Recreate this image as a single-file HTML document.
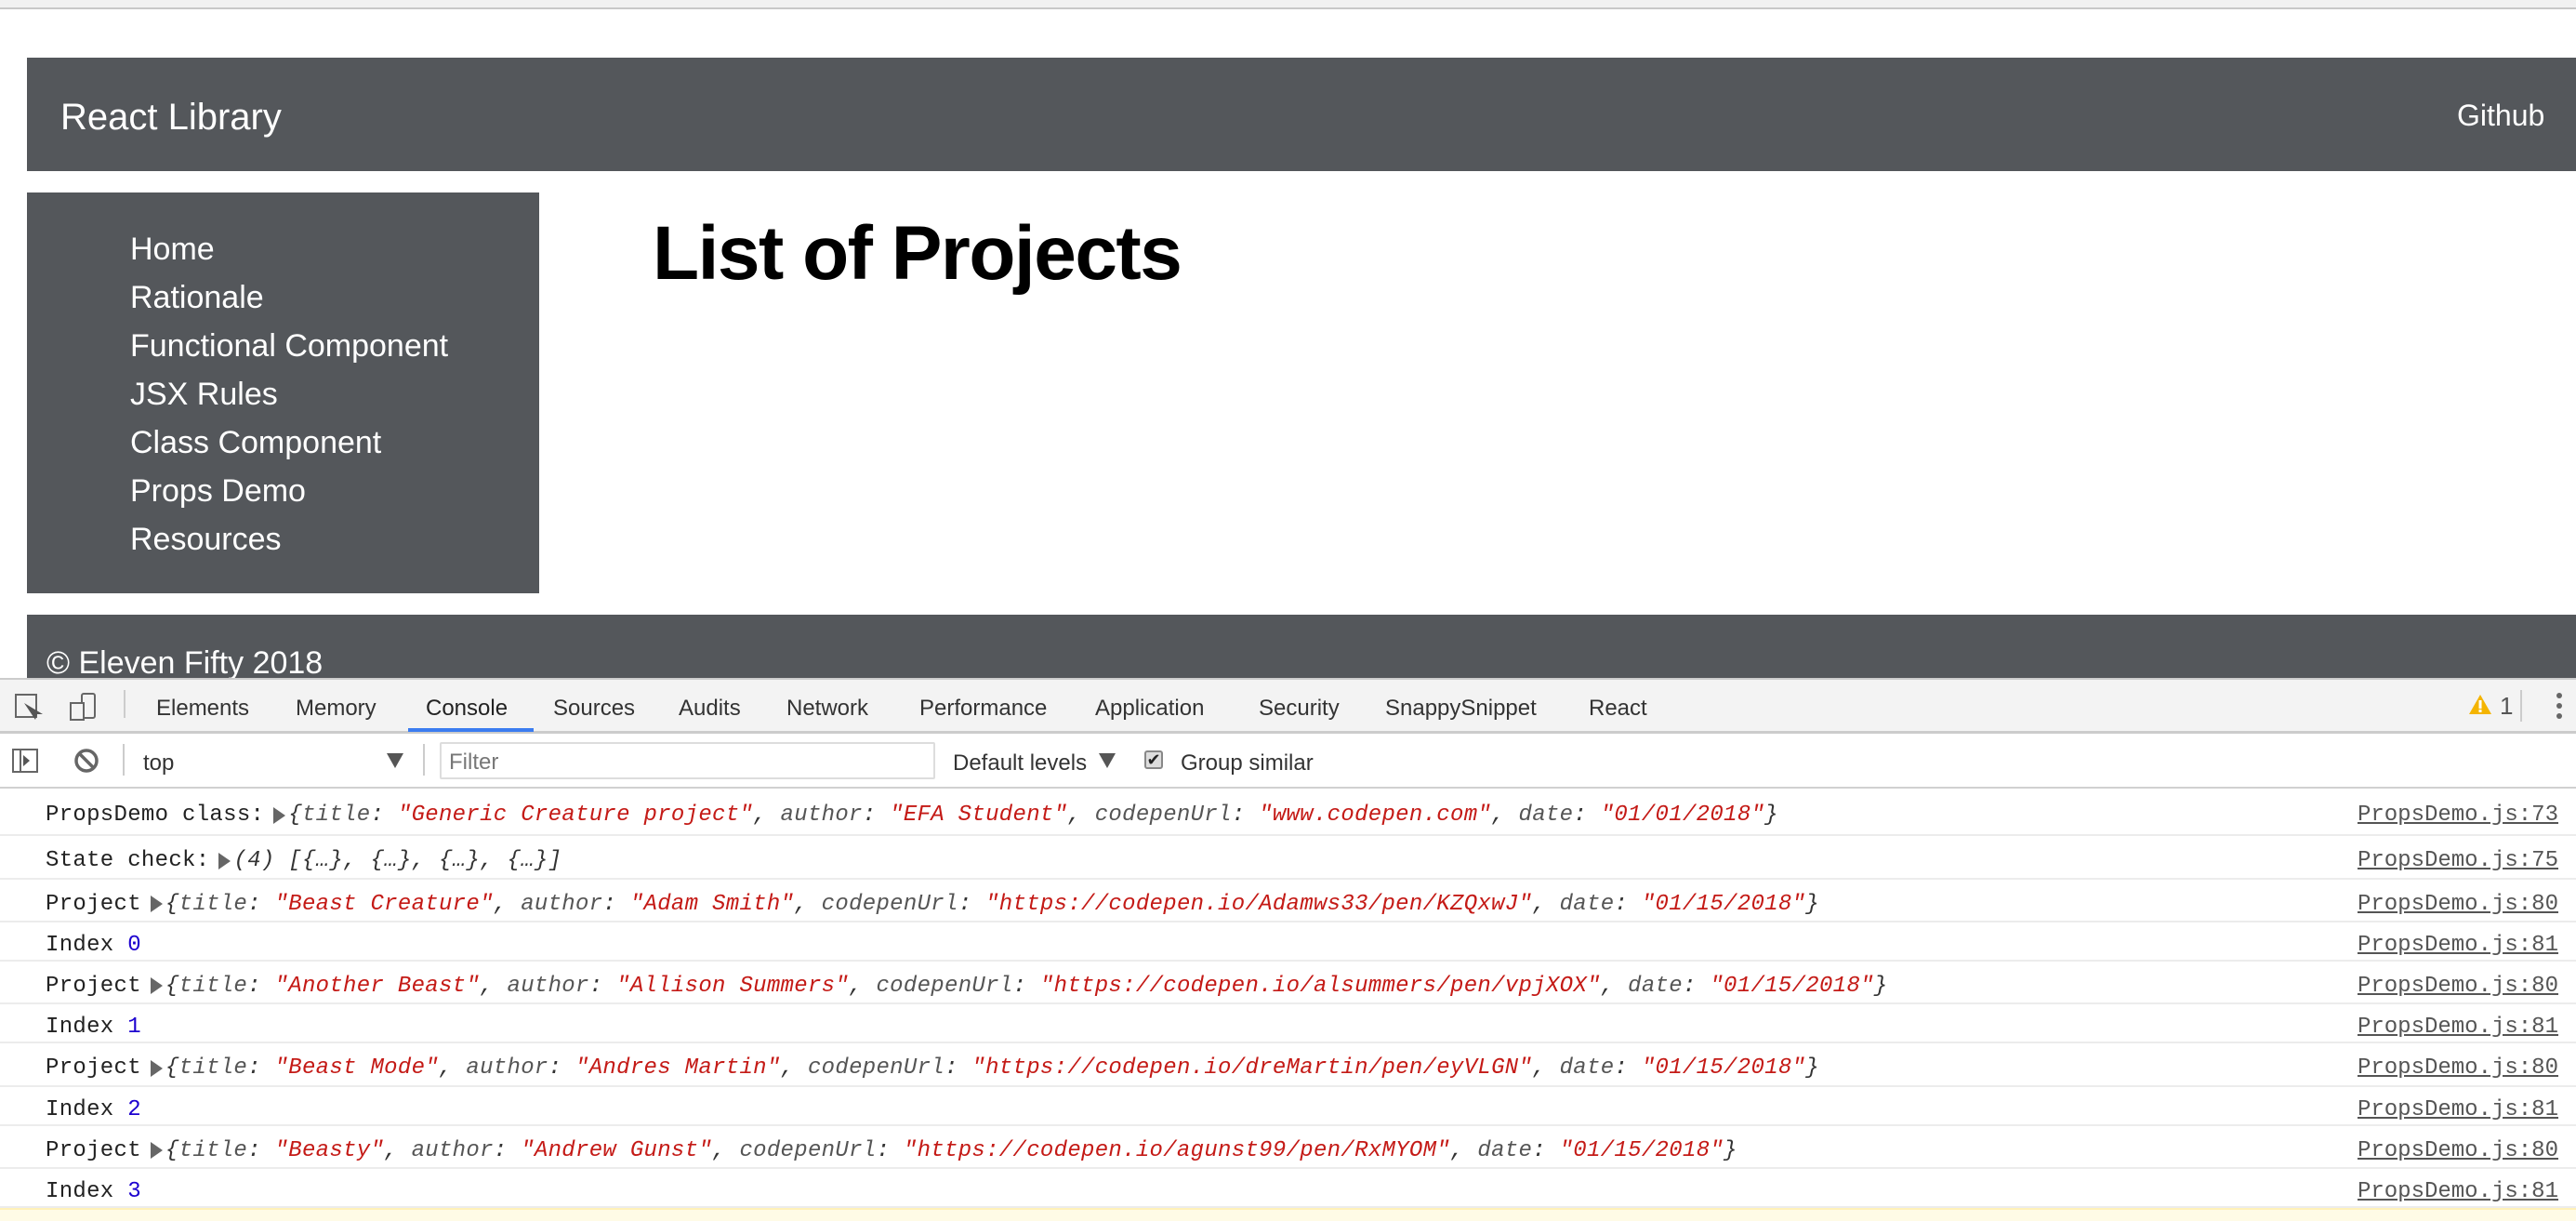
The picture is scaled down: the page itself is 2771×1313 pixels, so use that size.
<!DOCTYPE html>
<html><head><meta charset="utf-8"><style>
*{margin:0;padding:0;box-sizing:border-box}
body{width:2771px;height:1313px;overflow:hidden;background:#fff;position:relative;font-family:"Liberation Sans",sans-serif}
.a{position:absolute}
.dk{background:#54575b}
.w{color:#fff}
.nav{position:absolute;left:140px;color:#fff;font-size:34px;line-height:52px}
.tab{position:absolute;top:748px;font-size:24px;color:#333}
.row{position:absolute;left:0;width:2771px;border-bottom:2px solid #ececec;font-family:"Liberation Mono",monospace;font-size:24px;color:#222;display:flex;align-items:center;padding-left:49px;padding-top:8px;white-space:pre}
.row .l{position:absolute;right:19px;color:#555;text-decoration:underline;letter-spacing:0}
.t{letter-spacing:0.3px}
.k{color:#555;font-style:italic}
.s{color:#c41a16;font-style:italic}
.o{font-style:italic;color:#333}
.n{color:#1c00cf}
.tri{display:inline-block;width:0;height:0;border-left:13px solid #666;border-top:9px solid transparent;border-bottom:9px solid transparent;margin:0 3px 0 10px}
</style></head><body>
<div class="a" style="left:0;top:0;width:2771px;height:10px;background:#f1f1f1;border-bottom:2px solid #c8c8c8"></div>
<div class="a dk" style="left:29px;top:62px;width:2742px;height:122px"></div>
<div class="a w" style="left:65px;top:104px;font-size:40px">React Library</div>
<div class="a w" style="left:2643px;top:106px;font-size:32px">Github</div>
<div class="a dk" style="left:29px;top:207px;width:551px;height:431px"></div>
<div class="nav" style="top:242px">Home</div>
<div class="nav" style="top:294px">Rationale</div>
<div class="nav" style="top:346px">Functional Component</div>
<div class="nav" style="top:398px">JSX Rules</div>
<div class="nav" style="top:450px">Class Component</div>
<div class="nav" style="top:502px">Props Demo</div>
<div class="nav" style="top:554px">Resources</div>
<div class="a" style="left:702px;top:226px;font-size:82px;font-weight:bold;color:#000;letter-spacing:-1.5px">List of Projects</div>
<div class="a dk" style="left:29px;top:661px;width:2742px;height:70px;overflow:hidden"><div class="w" style="position:absolute;left:21px;top:33px;font-size:34px">© Eleven Fifty 2018</div></div>
<div class="a" style="left:0;top:729px;width:2771px;height:60px;background:#f3f3f3;border-top:2px solid #ccc;border-bottom:3px solid #ccc"></div>
<svg class="a" style="left:14px;top:744px" width="110" height="34"><rect x="3" y="3" width="22" height="24" fill="none" stroke="#666" stroke-width="2"/><path d="M12 12 L24 30 L26 24 L32 24 Z" fill="#555"/><rect x="74" y="2" width="14" height="26" rx="2" fill="none" stroke="#666" stroke-width="2"/><rect x="62" y="12" width="14" height="18" fill="#f3f3f3" stroke="#666" stroke-width="2"/></svg>
<div class="a" style="left:133px;top:742px;width:2px;height:30px;background:#ccc"></div>
<div class="tab" style="left:168px">Elements</div>
<div class="tab" style="left:318px">Memory</div>
<div class="tab" style="left:458px;color:#222">Console</div>
<div class="a" style="left:439px;top:783px;width:135px;height:4px;background:#3b7cf0"></div>
<div class="tab" style="left:595px">Sources</div>
<div class="tab" style="left:730px">Audits</div>
<div class="tab" style="left:846px">Network</div>
<div class="tab" style="left:989px">Performance</div>
<div class="tab" style="left:1178px">Application</div>
<div class="tab" style="left:1354px">Security</div>
<div class="tab" style="left:1490px">SnappySnippet</div>
<div class="tab" style="left:1709px">React</div>
<svg class="a" style="left:2655px;top:746px" width="26" height="24"><path d="M13 1 L25 22 L1 22 Z" fill="#f4b400"/><rect x="11.5" y="7" width="3" height="9" fill="#fff"/><rect x="11.5" y="17" width="3" height="3" fill="#fff"/></svg>
<div class="a" style="left:2689px;top:744px;font-size:26px;color:#555">1</div>
<div class="a" style="left:2711px;top:742px;width:2px;height:34px;background:#ccc"></div>
<svg class="a" style="left:2748px;top:744px" width="10" height="32"><circle cx="5" cy="4" r="3" fill="#666"/><circle cx="5" cy="15" r="3" fill="#666"/><circle cx="5" cy="26" r="3" fill="#666"/></svg>
<div class="a" style="left:0;top:789px;width:2771px;height:59px;background:#fff;border-bottom:2px solid #d0d0d0"></div>
<svg class="a" style="left:12px;top:804px" width="40" height="30"><rect x="2" y="2" width="26" height="24" fill="none" stroke="#666" stroke-width="2"/><line x1="10" y1="2" x2="10" y2="26" stroke="#666" stroke-width="2"/><path d="M13 8 L20 14 L13 20 Z" fill="#555"/></svg>
<svg class="a" style="left:78px;top:803px" width="30" height="30"><circle cx="15" cy="15" r="11" fill="none" stroke="#666" stroke-width="3.5"/><line x1="7" y1="7" x2="23" y2="23" stroke="#666" stroke-width="3.5"/></svg>
<div class="a" style="left:132px;top:800px;width:2px;height:34px;background:#ccc"></div>
<div class="a" style="left:154px;top:807px;font-size:24px;color:#333">top</div>
<div class="a" style="left:416px;top:810px;width:0;height:0;border-left:9px solid transparent;border-right:9px solid transparent;border-top:16px solid #555"></div>
<div class="a" style="left:455px;top:800px;width:2px;height:34px;background:#ccc"></div>
<div class="a" style="left:473px;top:798px;width:533px;height:40px;border:2px solid #ddd;border-radius:2px;font-size:24px;color:#777;padding:6px 8px">Filter</div>
<div class="a" style="left:1025px;top:807px;font-size:24px;color:#333">Default levels</div>
<div class="a" style="left:1182px;top:810px;width:0;height:0;border-left:9px solid transparent;border-right:9px solid transparent;border-top:16px solid #555"></div>
<div class="a" style="left:1231px;top:807px;width:20px;height:20px;border:2px solid #888;border-radius:3px;background:#ddd;font-size:18px;line-height:16px;text-align:center;color:#222">✔</div>
<div class="a" style="left:1270px;top:807px;font-size:24px;color:#333">Group similar</div>
<div class="row" style="top:848px;height:51px"><span class="t">PropsDemo class:</span><span class="tri"></span><span class="o t">{<span class="k">title</span>: <span class="s">"Generic Creature project"</span>, <span class="k">author</span>: <span class="s">"EFA Student"</span>, <span class="k">codepenUrl</span>: <span class="s">"www.codepen.com"</span>, <span class="k">date</span>: <span class="s">"01/01/2018"</span>}</span><span class="l">PropsDemo.js:73</span></div>
<div class="row" style="top:899px;height:47px"><span class="t">State check:</span><span class="tri"></span><span class="o t">(4) [{…}, {…}, {…}, {…}]</span><span class="l">PropsDemo.js:75</span></div>
<div class="row" style="top:946px;height:46px"><span class="t">Project</span><span class="tri"></span><span class="o t">{<span class="k">title</span>: <span class="s">"Beast Creature"</span>, <span class="k">author</span>: <span class="s">"Adam Smith"</span>, <span class="k">codepenUrl</span>: <span class="s">"https://codepen.io/Adamws33/pen/KZQxwJ"</span>, <span class="k">date</span>: <span class="s">"01/15/2018"</span>}</span><span class="l">PropsDemo.js:80</span></div>
<div class="row" style="top:992px;height:42px"><span class="t">Index <span class="n">0</span></span><span class="l">PropsDemo.js:81</span></div>
<div class="row" style="top:1034px;height:46px"><span class="t">Project</span><span class="tri"></span><span class="o t">{<span class="k">title</span>: <span class="s">"Another Beast"</span>, <span class="k">author</span>: <span class="s">"Allison Summers"</span>, <span class="k">codepenUrl</span>: <span class="s">"https://codepen.io/alsummers/pen/vpjXOX"</span>, <span class="k">date</span>: <span class="s">"01/15/2018"</span>}</span><span class="l">PropsDemo.js:80</span></div>
<div class="row" style="top:1080px;height:42px"><span class="t">Index <span class="n">1</span></span><span class="l">PropsDemo.js:81</span></div>
<div class="row" style="top:1122px;height:47px"><span class="t">Project</span><span class="tri"></span><span class="o t">{<span class="k">title</span>: <span class="s">"Beast Mode"</span>, <span class="k">author</span>: <span class="s">"Andres Martin"</span>, <span class="k">codepenUrl</span>: <span class="s">"https://codepen.io/dreMartin/pen/eyVLGN"</span>, <span class="k">date</span>: <span class="s">"01/15/2018"</span>}</span><span class="l">PropsDemo.js:80</span></div>
<div class="row" style="top:1169px;height:42px"><span class="t">Index <span class="n">2</span></span><span class="l">PropsDemo.js:81</span></div>
<div class="row" style="top:1211px;height:46px"><span class="t">Project</span><span class="tri"></span><span class="o t">{<span class="k">title</span>: <span class="s">"Beasty"</span>, <span class="k">author</span>: <span class="s">"Andrew Gunst"</span>, <span class="k">codepenUrl</span>: <span class="s">"https://codepen.io/agunst99/pen/RxMYOM"</span>, <span class="k">date</span>: <span class="s">"01/15/2018"</span>}</span><span class="l">PropsDemo.js:80</span></div>
<div class="row" style="top:1257px;height:42px"><span class="t">Index <span class="n">3</span></span><span class="l">PropsDemo.js:81</span></div>
<div class="a" style="left:0;top:1299px;width:2771px;height:14px;background:#fffbe6;border-top:2px solid #fff1b8"></div>
</body></html>
